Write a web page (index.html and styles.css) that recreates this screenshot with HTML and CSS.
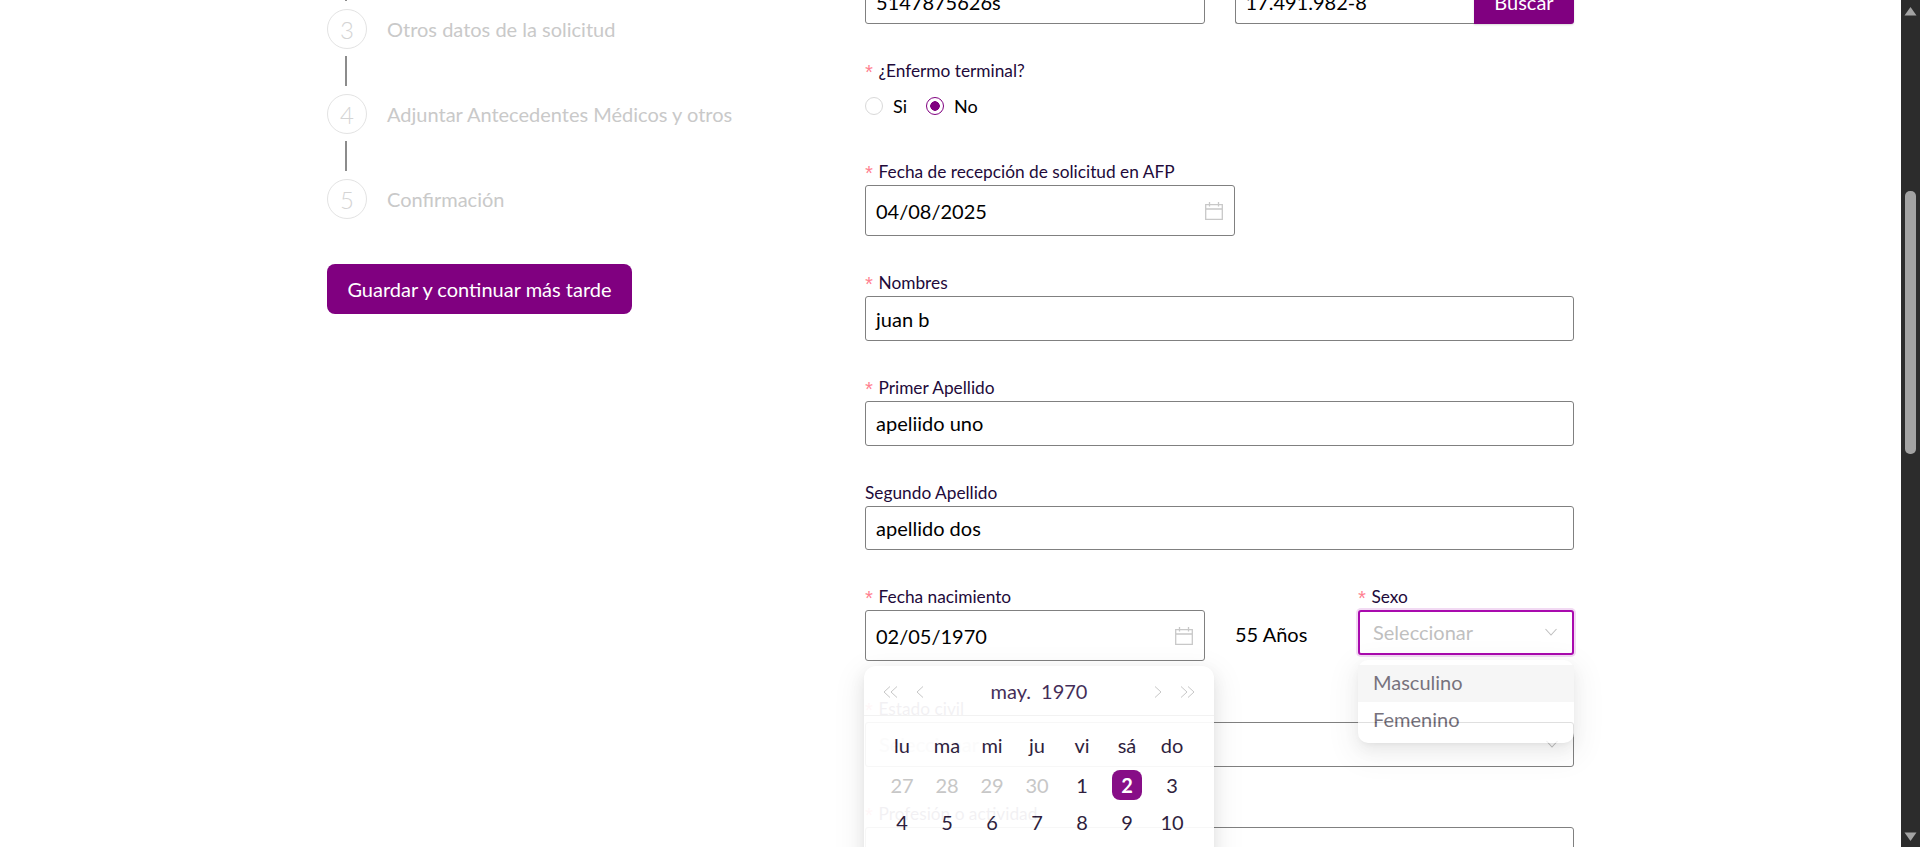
FILE: index.html
```html
<!DOCTYPE html>
<html lang="es">
<head>
    <meta charset="UTF-8">
    <meta name="viewport" content="width=device-width, initial-scale=1.0">
    <title>Solicitud</title>
    <link rel="stylesheet" href="styles.css">
</head>
<body>

<div class="page">
    <div class="content">
        <aside class="sidebar">
            <div class="connector"></div>
            <div class="step"><span class="step-num">3</span><span class="step-label">Otros datos de la solicitud</span></div>
            <div class="connector"></div>
            <div class="step"><span class="step-num">4</span><span class="step-label">Adjuntar Antecedentes Médicos y otros</span></div>
            <div class="connector"></div>
            <div class="step"><span class="step-num">5</span><span class="step-label">Confirmación</span></div>
            <button class="btn-save" type="button">Guardar y continuar más tarde</button>
        </aside>

        <form class="form" action="#">
            <div class="row row-split">
                <div class="field">
                    <label class="label">Folio</label>
                    <div class="input">5147875626s</div>
                </div>
                <div class="field">
                    <label class="label">RUT</label>
                    <div class="search">
                        <div class="input input-search">17.491.982-8</div>
                        <button class="btn-search" type="button">Buscar</button>
                    </div>
                </div>
            </div>

            <div class="field">
                <label class="label"><span class="req">*</span>¿Enfermo terminal?</label>
                <div class="radios">
                    <span class="radio"><i class="radio-dot"></i>Si</span>
                    <span class="radio"><i class="radio-dot radio-on"></i>No</span>
                </div>
            </div>

            <div class="field field-date field-date-wide">
                <label class="label"><span class="req">*</span>Fecha de recepción de solicitud en AFP</label>
                <div class="input input-date">04/08/2025
                    <svg class="icon-cal" width="18" height="18" viewBox="0 0 18 18" fill="none" stroke="#c8c8c8" stroke-width="1.3"><path d="M.7 2.7h16.6v14.6H.7zM.7 7h16.6M4.5 0v4.5M13.5 0v4.5"/></svg>
                </div>
            </div>

            <div class="field">
                <label class="label"><span class="req">*</span>Nombres</label>
                <div class="input">juan b</div>
            </div>

            <div class="field">
                <label class="label"><span class="req">*</span>Primer Apellido</label>
                <div class="input">apeliido uno</div>
            </div>

            <div class="field">
                <label class="label">Segundo Apellido</label>
                <div class="input">apellido dos</div>
            </div>

            <div class="row row-birth">
                <div class="field field-date">
                    <label class="label"><span class="req">*</span>Fecha nacimiento</label>
                    <div class="input input-date">02/05/1970
                        <svg class="icon-cal" width="18" height="18" viewBox="0 0 18 18" fill="none" stroke="#c8c8c8" stroke-width="1.3"><path d="M.7 2.7h16.6v14.6H.7zM.7 7h16.6M4.5 0v4.5M13.5 0v4.5"/></svg>
                    </div>

                    <div class="calendar">
                        <div class="cal-head">
                            <span class="cal-nav">
                                <svg width="15" height="12" viewBox="0 0 15 12" fill="none" stroke="#c4c4c4"><path d="M7 .5 1 6l6 5.500M14 .5 8 6l6 5.500"/></svg>
                                <svg width="8" height="12" viewBox="0 0 8 12" fill="none" stroke="#c4c4c4"><path d="M7 .5 1 6l6 5.500"/></svg>
                            </span>
                            <span class="cal-title"><span>may.</span><span>1970</span></span>
                            <span class="cal-nav">
                                <svg width="8" height="12" viewBox="0 0 8 12" fill="none" stroke="#c4c4c4"><path d="m1 .5 6 5.500-6 5.500"/></svg>
                                <svg width="15" height="12" viewBox="0 0 15 12" fill="none" stroke="#c4c4c4"><path d="m1 .5 6 5.500-6 5.500M8 .5l6 5.500-6 5.500"/></svg>
                            </span>
                        </div>
                        <div class="cal-grid cal-week">
                            <span>lu</span><span>ma</span><span>mi</span><span>ju</span><span>vi</span><span>sá</span><span>do</span>
                        </div>
                        <div class="cal-grid cal-days">
                            <span class="off">27</span><span class="off">28</span><span class="off">29</span><span class="off">30</span><span>1</span><span><b class="selected">2</b></span><span>3</span>
                            <span>4</span><span>5</span><span>6</span><span>7</span><span>8</span><span>9</span><span>10</span>
                        </div>
                    </div>
                </div>

                <div class="age">55 Años</div>

                <div class="field field-sex">
                    <label class="label"><span class="req">*</span>Sexo</label>
                    <div class="select select-focus">
                        <span class="placeholder">Seleccionar</span>
                        <svg width="12" height="8" viewBox="0 0 12 8" fill="none" stroke="#bfbfbf" stroke-width="1.100"><path d="m.5 1 5.500 6 5.500-6"/></svg>
                    </div>

                    <div class="dropdown">
                        <div class="option option-active">Masculino</div>
                        <div class="option">Femenino</div>
                    </div>
                </div>
            </div>

            <div class="field">
                <label class="label"><span class="req">*</span>Estado civil</label>
                <div class="select">
                    <span class="placeholder">Seleccionar</span>
                    <svg width="12" height="8" viewBox="0 0 12 8" fill="none" stroke="#bfbfbf" stroke-width="1.100"><path d="m.5 1 5.500 6 5.500-6"/></svg>
                </div>
            </div>

            <div class="field">
                <label class="label"><span class="req">*</span>Profesión o actividad</label>
                <div class="input"></div>
            </div>
        </form>
    </div>

    <div class="scrollbar">
        <svg width="13" height="10" viewBox="0 0 13 10" fill="#a3a3a3"><path d="M6.500 1 12.500 9.500H.5z"/></svg>
        <div class="thumb"></div>
        <svg class="arrow-down" width="13" height="10" viewBox="0 0 13 10" fill="#a3a3a3"><path d="M6.500 9 12.500.5H.5z"/></svg>
    </div>
</div>

</body>
</html>
```

FILE: styles.css
```css
* {
    box-sizing: border-box;
}

body {
    margin: 0;
    font-family: Lato, "Open Sans", sans-serif;
    background-color: #fff;
    color: #000;
}

.page {
    display: flex;
    height: 100vh;
    overflow: hidden;
}

.content {
    flex: 1;
    display: flex;
    padding-left: 327px;
}

/* sidebar steps */
.sidebar {
    width: 538px;
    flex: none;
    margin-top: -29px;
}

.connector {
    width: 2px;
    height: 30px;
    margin: 0 0 8px 18px;
    background-color: #8c8c8c;
}

.step {
    display: flex;
    align-items: center;
    gap: 20px;
    height: 40px;
    margin-bottom: 7px;
}

.step-num {
    width: 40px;
    height: 40px;
    flex: none;
    display: flex;
    align-items: center;
    justify-content: center;
    border: 1px solid #e3e3e3;
    border-radius: 50%;
    font-size: 24px;
    font-weight: 300;
    color: #d4d4d4;
}

.step-label {
    font-size: 20px;
    color: #c9c9c9;
}

.btn-save {
    display: block;
    width: 305px;
    height: 50px;
    margin-top: 45px;
    border: none;
    border-radius: 8px;
    background-color: #800080;
    color: #fff;
    font-family: inherit;
    font-size: 20px;
}

/* form */
.form {
    width: 709px;
    flex: none;
    display: flex;
    flex-direction: column;
    gap: 36px;
    margin-top: -44.6px;
}

.row {
    display: flex;
}

.row-split {
    gap: 30px;
}

.row-split .field {
    flex: 1;
}

.field {
    position: relative;
}

.field-date {
    width: 340px;
}

.field-date-wide {
    width: 370px;
}

.label {
    display: block;
    height: 24px;
    line-height: 22px;
    font-size: 17.300px;
    color: #220a3a;
}

.req {
    display: inline-block;
    width: 15.500px;
    margin-left: -2px;
    font-family: "Liberation Mono", monospace;
    font-size: 20px;
    line-height: 20px;
    vertical-align: -3px;
    color: #ff7f90;
}

.input,
.select {
    display: flex;
    align-items: center;
    justify-content: space-between;
    height: 44.6px;
    padding: 0 10px;
    border: 1px solid #808080;
    border-radius: 3px;
    font-size: 20px;
    background-color: #fff;
}

.input-date {
    height: 51px;
    padding-right: 11px;
}

.icon-cal {
    flex: none;
}

.search {
    display: flex;
}

.input-search {
    flex: 1;
    border-right: none;
    border-radius: 3px 0 0 3px;
}

.btn-search {
    width: 100px;
    border: none;
    border-radius: 0 3px 3px 0;
    background-color: #800080;
    color: #fff;
    font-family: inherit;
    font-size: 20px;
    box-shadow: 0 1px 2px rgba(0, 0, 0, 0.15);
}

.radios {
    display: flex;
    gap: 19px;
    height: 41.400px;
    padding-top: 4px;
    font-size: 18px;
}

.radio {
    display: flex;
    align-items: center;
    gap: 10px;
    height: 35px;
}

.radio-dot {
    width: 18px;
    height: 18px;
    border: 1px solid #d9d9d9;
    border-radius: 50%;
}

.radio-on {
    border-color: #800080;
    background: radial-gradient(circle, #800080 0 4.500px, #fff 5px);
}

.row-birth {
    position: relative;
}

.age {
    width: 153px;
    height: 76px;
    padding: 23px 0 0 30px;
    line-height: 50px;
    font-size: 20px;
}

.field-sex {
    width: 216px;
}

.select {
    padding: 0 15px 0 13px;
}

.select-focus {
    border: 2px solid #a90aae;
    box-shadow: 0 0 0 2px rgba(169, 10, 174, 0.15);
}

.placeholder {
    color: #bfbfbf;
}

/* popups over the form */
.calendar {
    position: absolute;
    top: 80px;
    left: -1px;
    z-index: 2;
    width: 350px;
    height: 300px;
    padding: 0 15.500px;
    border-radius: 12px;
    background-color: #fff;
    opacity: 0.94;
    box-shadow: 0 6px 16px rgba(0, 0, 0, 0.08), 0 3px 6px -4px rgba(0, 0, 0, 0.12), 0 9px 28px 8px rgba(0, 0, 0, 0.05);
}

.cal-head {
    display: flex;
    align-items: center;
    justify-content: space-between;
    height: 50px;
    margin: 0 -15.500px;
    padding: 1px 19px 0;
    border-bottom: 1px solid #f2f2f2;
    font-size: 20px;
    color: #3a1f50;
}

.cal-nav {
    display: flex;
    align-items: center;
    gap: 18px;
    margin-top: 2px;
}

.cal-title {
    display: flex;
    gap: 10px;
}

.cal-grid {
    display: grid;
    grid-template-columns: repeat(7, 45px);
    justify-items: center;
    align-items: center;
    font-size: 20px;
    color: #241233;
}

.cal-week {
    height: 49px;
    padding-top: 8px;
}

.cal-days {
    grid-auto-rows: 37px;
    margin-top: 1px;
}

.off {
    color: #c4c4c4;
}

.selected {
    display: flex;
    align-items: center;
    justify-content: center;
    width: 30px;
    height: 30px;
    border-radius: 8px;
    background-color: #800080;
    color: #fff;
    font-weight: 700;
}

.dropdown {
    position: absolute;
    top: 74px;
    left: 0;
    z-index: 2;
    width: 216px;
    padding: 5px 0 5px;
    border-radius: 10px;
    background-color: #fff;
    opacity: 0.75;
    box-shadow: 0 6px 16px rgba(0, 0, 0, 0.08), 0 3px 6px -4px rgba(0, 0, 0, 0.12), 0 9px 28px 8px rgba(0, 0, 0, 0.05);
}

.option {
    height: 36.500px;
    line-height: 34px;
    padding: 0 15px;
    font-size: 20px;
    color: #4a4452;
}

.option-active {
    background-color: #f3f3f3;
}

/* browser scrollbar, the page is photographed scrolled */
.scrollbar {
    width: 19px;
    flex: none;
    display: flex;
    flex-direction: column;
    align-items: center;
    padding: 6px 0 5px;
    background-color: #2c2c2c;
}

.thumb {
    width: 11px;
    height: 263px;
    margin-top: 175px;
    border-radius: 5px;
    background-color: #a3a3a3;
}

.arrow-down {
    margin-top: auto;
}
```
